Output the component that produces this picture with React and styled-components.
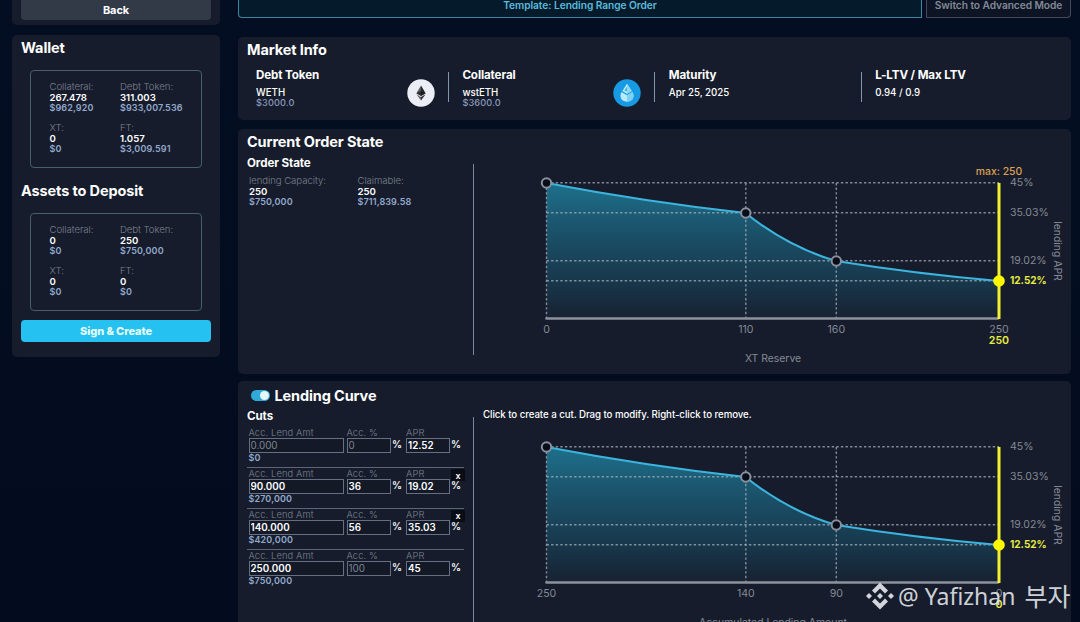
import React from 'react';
import styled, { createGlobalStyle } from 'styled-components';

const GlobalStyle = createGlobalStyle`
  * {
    box-sizing: border-box;
  }

  body {
    margin: 0;
    background: #040d20;
    color: #fff;
    font-family: Inter, 'Liberation Sans', sans-serif;
    overflow: hidden;
  }
`;

const Page = styled.div`
  display: grid;
  grid-template-columns: 208px 833px;
  column-gap: 18px;
  width: 1080px;
  height: 622px;
  padding-left: 12px;
  overflow: hidden;
  background: linear-gradient(180deg, #040e22 0%, #030c1e 100%);
`;

const Column = styled.div`
  display: flex;
  flex-direction: column;
`;

const Panel = styled.section`
  flex: none;
  height: ${props => props.height}px;
  margin-top: ${props => props.gap || 0}px;
  padding: ${props => props.pad || '0 9px'};
  background: #161c2b;
  border-radius: ${props => props.flatTop ? '0 0 5px 5px' : '5px'};
  overflow: hidden;
`;

const Title = styled.h2`
  margin: ${props => props.top || 0}px 0 0;
  font-size: 14.5px;
  line-height: 18px;
  font-weight: 700;
  letter-spacing: -0.12px;
  white-space: nowrap;
`;

const SubTitle = styled.h3`
  margin: ${props => props.top || 0}px 0 0;
  font-size: 11.6px;
  line-height: 14px;
  font-weight: 700;
  letter-spacing: -0.1px;
  white-space: nowrap;
`;

const Button = styled.button`
  display: block;
  width: 190px;
  height: ${props => props.primary ? 22 : 20}px;
  margin-top: ${props => props.primary ? 9 : 0}px;
  padding: 0;
  border: 0;
  border-radius: ${props => props.primary ? '4px' : '0 0 4px 4px'};
  background: ${props => props.primary ? '#25c2f1' : '#323947'};
  color: ${props => props.primary ? '#e6fbf8' : '#fff'};
  font-family: inherit;
  font-size: 11px;
  line-height: 20px;
  font-weight: ${props => props.primary ? 800 : 700};
  letter-spacing: ${props => props.primary ? '-0.1px' : '-0.1px'};
`;

const BalanceBox = styled.div`
  display: grid;
  grid-template-columns: 70.5px 1fr;
  align-content: start;
  row-gap: 9px;
  width: 172px;
  height: 98px;
  margin: 13px 0 0 9px;
  padding: 10px 0 0 18.5px;
  border: 1px solid #45606d;
  border-radius: 4px;
`;

const StatBlock = styled.div`
  display: flex;
  flex-direction: column;
  white-space: nowrap;
`;

const StatLabel = styled.span`
  font-size: 9.6px;
  line-height: 12px;
  font-weight: 300;
  letter-spacing: -0.05px;
  color: #7b8290;
`;

const StatValue = styled.span`
  font-size: 9.6px;
  line-height: 10px;
  font-weight: 600;
`;

const StatUsd = styled.span`
  font-size: 9px;
  line-height: 10px;
  font-weight: 600;
  letter-spacing: 0.12px;
  color: #93a9cc;
`;

const ModeBar = styled.div`
  display: grid;
  grid-template-columns: 684px 145px;
  column-gap: 4px;
  height: 18px;
`;

const ModeTab = styled.div`
  border: 1px solid ${props => props.active ? '#3f86a2' : '#434b5a'};
  border-top: 0;
  border-radius: ${props => props.active ? '0 0 0 4px' : '0 0 4px 0'};
  background: ${props => props.active ? '#051a2b' : '#0d1424'};
  color: ${props => props.active ? '#5bbbdc' : '#838996'};
  font-size: 10.2px;
  line-height: 10.5px;
  font-weight: 600;
  letter-spacing: -0.06px;
  text-align: center;
  white-space: nowrap;
`;

const MarketGrid = styled.div`
  display: grid;
  grid-template-columns: repeat(4, 206.4px);
  padding: 9px 0 0 9px;
`;

const MarketCell = styled.div`
  display: flex;
  height: 44px;
`;

const MarketText = styled.div`
  display: flex;
  flex-direction: column;
  flex: 1;
  white-space: nowrap;
`;

const MarketValue = styled.span`
  margin-top: 5px;
  font-size: 9.7px;
  line-height: 11px;
  font-weight: 500;
`;

const MarketUsd = styled.span`
  font-size: 9.2px;
  line-height: 9px;
  font-weight: 500;
  letter-spacing: 0.1px;
  color: #8b98bb;
`;

const TokenIcon = styled.svg`
  width: 28px;
  height: 28px;
  margin: 11px 13px 0 0;
`;

const CellDivider = styled.div`
  width: 1px;
  height: 30px;
  margin: 4px 13.5px 0 0;
  background: #8496ac;
`;

const Split = styled.div`
  display: grid;
  grid-template-columns: 227px 597px;
`;

const SidePane = styled.div`
  height: ${props => props.height}px;
  border-right: 1px solid transparent;
  border-image: linear-gradient(180deg, transparent ${props => props.lineTop}px, #77899f ${props => props.lineTop}px) 1;
`;

const OrderStats = styled.div`
  display: grid;
  grid-template-columns: 108.5px 1fr;
  padding: 5px 0 0 2px;
`;

const ChartSvg = styled.svg`
  display: block;
  width: 597px;
  height: 209px;
  margin-top: ${props => props.offset}px;
  overflow: visible;
  font-family: Inter, 'Liberation Sans', sans-serif;
`;

const CurveHeader = styled.div`
  display: flex;
  align-items: center;
  gap: 4.5px;
  padding-left: 4px;
`;

const Toggle = styled.span`
  display: flex;
  justify-content: flex-end;
  width: 19px;
  height: 11px;
  padding: 1px;
  margin-top: -2px;
  border-radius: 6px;
  background: #2fa9d8;

  &::after {
    content: '';
    width: 9px;
    height: 9px;
    border-radius: 50%;
    background: #e8f6fa;
  }
`;

const CutList = styled.div`
  width: 217px;
  padding-top: 3.4px;
`;

const CutRow = styled.div`
  position: relative;
  display: grid;
  grid-template-columns: 98px 45px 14.5px 44.5px 14px;
  height: 40.8px;
  padding-left: 1.5px;
  border-top: 1px solid ${props => props.first ? 'transparent' : '#5b6677'};
`;

const Field = styled.label`
  display: flex;
  flex-direction: column;
  white-space: nowrap;
`;

const FieldLabel = styled.span`
  margin-bottom: -1px;
  font-size: 9.4px;
  line-height: 12px;
  font-weight: 300;
  letter-spacing: 0.1px;
  color: #7b8290;
`;

const Input = styled.input`
  width: ${props => props.wide ? 95 : 44}px;
  height: 15px;
  padding: 0 1px;
  border: 1px solid #667080;
  border-radius: 0;
  outline: 0;
  background: #131927;
  color: ${props => props.disabled ? '#7f8590' : '#fff'};
  font-family: inherit;
  font-size: 9.8px;
  font-weight: ${props => props.disabled ? 400 : 600};
  letter-spacing: 0;
`;

const Percent = styled.span`
  padding: 12px 0 0 0.5px;
  font-size: 10px;
  line-height: 10px;
  font-weight: 600;
`;

const RemoveButton = styled.button`
  position: absolute;
  top: 1px;
  right: -1px;
  width: 14px;
  height: 12px;
  padding: 0;
  border: 0;
  background: #080c15;
  color: #fff;
  font-family: inherit;
  font-size: 9px;
  line-height: 11px;
  font-weight: 600;
`;

const Hint = styled.p`
  margin: 3px 0 0 9px;
  height: 14px;
  font-size: 9.7px;
  line-height: 14px;
  font-weight: 500;
  letter-spacing: -0.06px;
  white-space: nowrap;
`;

const Watermark = styled.div`
  position: absolute;
  left: 866px;
  top: 580px;
  display: flex;
  align-items: center;
  gap: 4px;
  height: 32px;
  color: rgba(232, 234, 238, 0.9);
  font-family: 'Noto Sans', 'Noto Sans CJK KR', sans-serif;
  font-size: 23px;
  line-height: 32px;
  white-space: nowrap;

  svg {
    flex: none;
    width: 28px;
    height: 28px;
  }
`;

const KoreanName = styled.span`
  margin-left: 5px;
  font-size: 25px;
`;

const wallet = [
  { label: 'Collateral:', value: '267.478', usd: '$962,920' },
  { label: 'Debt Token:', value: '311.003', usd: '$933,007.536' },
  { label: 'XT:', value: '0', usd: '$0' },
  { label: 'FT:', value: '1.057', usd: '$3,009.591' }
];

const deposit = [
  { label: 'Collateral:', value: '0', usd: '$0' },
  { label: 'Debt Token:', value: '250', usd: '$750,000' },
  { label: 'XT:', value: '0', usd: '$0' },
  { label: 'FT:', value: '0', usd: '$0' }
];

const order = [
  { label: 'lending Capacity:', value: '250', usd: '$750,000' },
  { label: 'Claimable:', value: '250', usd: '$711,839.58' }
];

const cuts = [
  { amount: '0.000', percent: '0', apr: '12.52', usd: '$0', locked: true, lockedPercent: true },
  { amount: '90.000', percent: '36', apr: '19.02', usd: '$270,000', removable: true },
  { amount: '140.000', percent: '56', apr: '35.03', usd: '$420,000', removable: true },
  { amount: '250.000', percent: '100', apr: '45', usd: '$750,000', lockedPercent: true }
];

const levels = [
  { y: 18, label: '45%' },
  { y: 48, label: '35.03%' },
  { y: 96, label: '19.02%' },
  { y: 116, label: '12.52%', active: true }
];

const stops = [72.5, 271.8, 362.3, 525];

const curve = 'M72.5 18 Q172 37 271.5 48 Q314 82 362 96 Q443 109 525 116';

const Stat = ({ label, value, usd }) => (
  <StatBlock>
    <StatLabel>{label}</StatLabel>
    <StatValue>{value}</StatValue>
    <StatUsd>{usd}</StatUsd>
  </StatBlock>
);

const EthIcon = () => (
  <TokenIcon viewBox="0 0 28 28">
    <circle cx="14" cy="14" r="13.7" fill="#eceef5" />
    <path d="M14 6.5 L9.4 14.2 L14 17 Z" fill="#5a5b5e" />
    <path d="M14 6.5 L18.6 14.2 L14 17 Z" fill="#26272a" />
    <path d="M9.4 14.2 L14 12.1 L18.6 14.2 L14 17 Z" fill="#17181a" fillOpacity="0.7" />
    <path d="M9.4 15.2 L14 18 V21.6 Z" fill="#66676a" />
    <path d="M18.6 15.2 L14 18 V21.6 Z" fill="#2f3033" />
  </TokenIcon>
);

const StEthIcon = () => (
  <TokenIcon viewBox="0 0 28 28">
    <circle cx="14" cy="14" r="13.7" fill="#179ae3" />
    <path d="M14 4.8 L18.7 12 L14 14.8 L9.3 12 Z" fill="#c5effb" />
    <path d="M14 4.8 L18.7 12 L14 14.8 Z" fill="#8ed8f4" />
    <path d="M14 7.5 V12.8 L11.2 11.4 Z" fill="#46b5ea" />
    <path d="M8.6 13.1 L14 16.3 L19.4 13.1 C21.6 16.7 20.8 22.6 14 22.8 C7.2 22.6 6.4 16.7 8.6 13.1 Z" fill="#b8ebfa" />
    <path d="M14 16.3 L19.4 13.1 C21.6 16.7 20.8 22.6 14 22.8 Z" fill="#7dd1f1" />
  </TokenIcon>
);

const Chart = ({ id, offset, ticks, current, axis, max }) => (
  <ChartSvg offset={offset} viewBox="0 0 597 209">
    <defs>
      <linearGradient id={id} x1="0" y1="18" x2="0" y2="153" gradientUnits="userSpaceOnUse">
        <stop offset="0" stopColor="#1e708c" />
        <stop offset="0.3" stopColor="#1b566e" />
        <stop offset="0.7" stopColor="#18394e" />
        <stop offset="1" stopColor="#172232" />
      </linearGradient>
    </defs>
    <path d={`${curve} V153 H72.5 Z`} fill={`url(#${id})`} />
    <g stroke="#a4adbb" strokeOpacity="0.75" strokeWidth="1.4" strokeDasharray="2.4 2.2">
      {levels.map(level => (
        <line key={level.y} x1="72.5" x2="525" y1={level.y - 0.3} y2={level.y - 0.3} />
      ))}
      {stops.slice(0, 3).map(x => (
        <line key={x} x1={x} x2={x} y1="18" y2="153" />
      ))}
    </g>
    <path d="M72.5 153.5 H524" stroke="#8d929d" strokeWidth="2.6" strokeLinecap="round" />
    <path d={curve} fill="none" stroke="#3cb4dd" strokeWidth="2.1" />
    <path d="M525 18 V154" stroke="#f2f030" strokeWidth="3" />
    {stops.slice(0, 3).map((x, i) => (
      <circle key={x} cx={x} cy={levels[i].y} r="4.7" fill="#080d1a" stroke="#8b909c" strokeWidth="2" />
    ))}
    <circle cx="525" cy="116" r="5.8" fill="#fff800" />
    <g fontSize="10.6" fill="#858a96">
      {levels.map(level => (
        <text
          key={level.y}
          x="536"
          y={level.y + 3}
          fill={level.active ? '#e8eb45' : undefined}
          fontWeight={level.active ? 700 : 400}
          fontSize={level.active ? 10 : 10.5}
        >
          {level.label}
        </text>
      ))}
      {ticks.map((tick, i) => (
        <text key={tick} x={stops[i]} y="168" textAnchor="middle">{tick}</text>
      ))}
      <text x="525" y="179" textAnchor="middle" fill="#e8eb45" fontWeight="600">{current}</text>
      {max && <text x="525" y="10" textAnchor="middle" fill="#dda155" fontSize="10.4" fontWeight="500">{max}</text>}
      <text x="299" y="197" fontSize="10.4" textAnchor="middle">{axis}</text>
      <text transform="translate(580 86) rotate(90)" fontSize="10.4" textAnchor="middle">lending APR</text>
    </g>
  </ChartSvg>
);

const Cut = ({ cut, first }) => (
  <CutRow first={first}>
    <Field>
      <FieldLabel>Acc. Lend Amt</FieldLabel>
      <Input wide defaultValue={cut.amount} disabled={cut.locked} />
      <StatUsd>{cut.usd}</StatUsd>
    </Field>
    <Field>
      <FieldLabel>Acc. %</FieldLabel>
      <Input defaultValue={cut.percent} disabled={cut.lockedPercent} />
    </Field>
    <Percent>%</Percent>
    <Field>
      <FieldLabel>APR</FieldLabel>
      <Input defaultValue={cut.apr} />
    </Field>
    <Percent>%</Percent>
    {cut.removable && <RemoveButton>x</RemoveButton>}
  </CutRow>
);

const App = () => (
  <>
    <GlobalStyle />
    <Page>
      <Column>
        <Panel height={25} flatTop>
          <Button>Back</Button>
        </Panel>
        <Panel height={322} gap={10} pad="4px 9px">
          <Title>Wallet</Title>
          <BalanceBox>
            {wallet.map(item => <Stat key={item.label} {...item} />)}
          </BalanceBox>
          <Title top={14}>Assets to Deposit</Title>
          <BalanceBox>
            {deposit.map(item => <Stat key={item.label} {...item} />)}
          </BalanceBox>
          <Button primary>Sign &amp; Create</Button>
        </Panel>
      </Column>

      <Column>
        <ModeBar>
          <ModeTab active>Template: Lending Range Order</ModeTab>
          <ModeTab>Switch to Advanced Mode</ModeTab>
        </ModeBar>

        <Panel height={83} gap={19} pad="4px 0 0 9px">
          <Title>Market Info</Title>
          <MarketGrid>
            <MarketCell>
              <MarketText>
                <SubTitle>Debt Token</SubTitle>
                <MarketValue>WETH</MarketValue>
                <MarketUsd>$3000.0</MarketUsd>
              </MarketText>
              <EthIcon />
              <CellDivider />
            </MarketCell>
            <MarketCell>
              <MarketText>
                <SubTitle>Collateral</SubTitle>
                <MarketValue>wstETH</MarketValue>
                <MarketUsd>$3600.0</MarketUsd>
              </MarketText>
              <StEthIcon />
              <CellDivider />
            </MarketCell>
            <MarketCell>
              <MarketText>
                <SubTitle>Maturity</SubTitle>
                <MarketValue>Apr 25, 2025</MarketValue>
              </MarketText>
              <CellDivider />
            </MarketCell>
            <MarketCell>
              <MarketText>
                <SubTitle>L-LTV / Max LTV</SubTitle>
                <MarketValue>0.94 / 0.9</MarketValue>
              </MarketText>
            </MarketCell>
          </MarketGrid>
        </Panel>

        <Panel height={245} gap={9} pad="4px 0 0 9px">
          <Title>Current Order State</Title>
          <Split>
            <SidePane height={204} lineTop={14}>
              <SubTitle top={5}>Order State</SubTitle>
              <OrderStats>
                {order.map(item => <Stat key={item.label} {...item} />)}
              </OrderStats>
            </SidePane>
            <Chart
              id="orderFill"
              offset={14}
              ticks={['0', '110', '160', '250']}
              current="250"
              axis="XT Reserve"
              max="max: 250"
            />
          </Split>
        </Panel>

        <Panel height={260} gap={7} pad="6px 0 0 9px">
          <CurveHeader>
            <Toggle />
            <Title>Lending Curve</Title>
          </CurveHeader>
          <Split>
            <SidePane height={240} lineTop={13}>
              <SubTitle top={4}>Cuts</SubTitle>
              <CutList>
                {cuts.map((cut, index) => <Cut key={cut.amount} cut={cut} first={index === 0} />)}
              </CutList>
            </SidePane>
            <div>
              <Hint>Click to create a cut. Drag to modify. Right-click to remove.</Hint>
              <Chart
                id="curveFill"
                offset={7}
                ticks={['250', '140', '90', '0']}
                current="0"
                axis="Accumulated Lending Amount"
              />
            </div>
          </Split>
        </Panel>
      </Column>
    </Page>

    <Watermark>
      <svg viewBox="0 0 28 28" fill="currentColor">
        <path d="M14 0.5 L22 8.5 L19 11.5 L14 6.5 L9 11.5 L6 8.5 Z" />
        <path d="M14 27.5 L22 19.5 L19 16.5 L14 21.5 L9 16.5 L6 19.5 Z" />
        <path d="M14 11 L17 14 L14 17 L11 14 Z" />
        <path d="M3 11 L6 14 L3 17 L0 14 Z" />
        <path d="M25 11 L28 14 L25 17 L22 14 Z" />
      </svg>
      @ Yafizhan
      <KoreanName>부자</KoreanName>
    </Watermark>
  </>
);

export default App;
